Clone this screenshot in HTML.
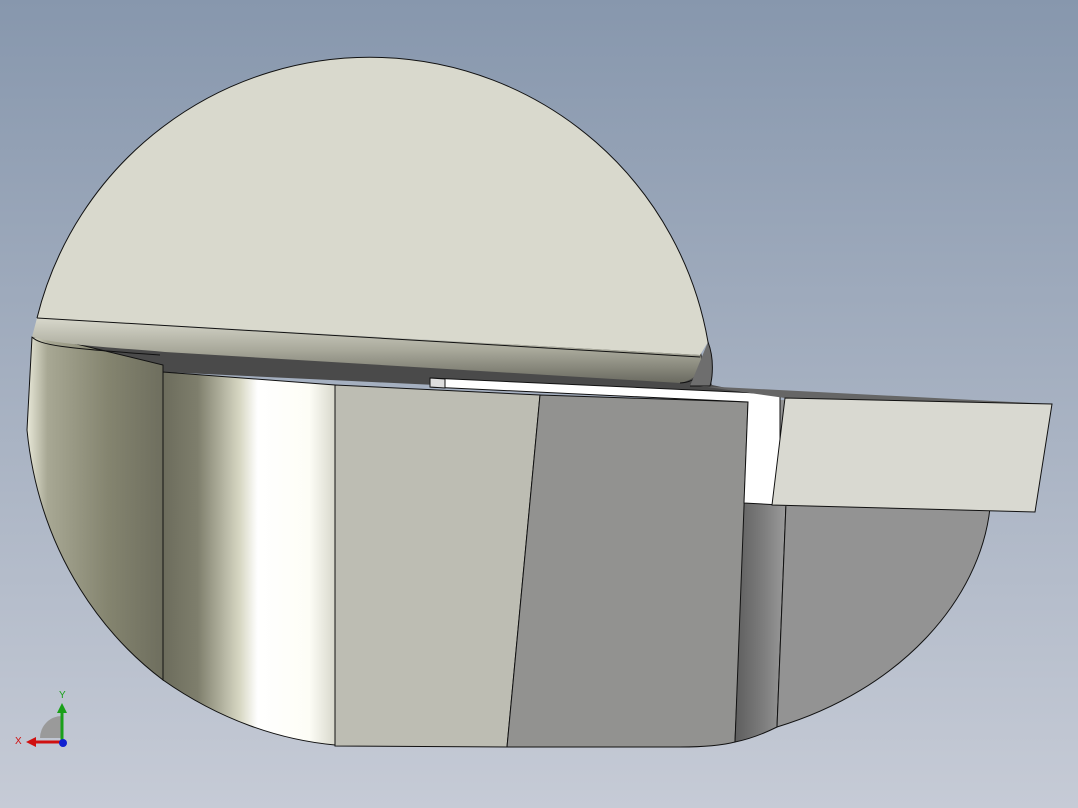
<!DOCTYPE html>
<html><head><style>html,body{margin:0;padding:0;overflow:hidden}svg{display:block}</style></head><body>
<svg width="1078" height="808" viewBox="0 0 1078 808" xmlns="http://www.w3.org/2000/svg">
<defs>
<linearGradient id="bg" x1="0" y1="0" x2="0" y2="1"><stop offset="0" stop-color="#8797ad"/><stop offset="1" stop-color="#c6cbd6"/></linearGradient>
<linearGradient id="cylL" x1="0" x2="1"><stop offset="0" stop-color="#e8e8d8"/><stop offset="0.15" stop-color="#a8a894"/><stop offset="0.6" stop-color="#84846f"/><stop offset="1" stop-color="#6e6e5e"/></linearGradient>
<linearGradient id="cylM" x1="0" x2="1"><stop offset="0" stop-color="#6c6c5c"/><stop offset="0.2" stop-color="#7e7e6c"/><stop offset="0.45" stop-color="#d8d8c4"/><stop offset="0.55" stop-color="#ffffff"/><stop offset="0.85" stop-color="#fdfdf6"/><stop offset="1" stop-color="#d8d8cc"/></linearGradient>
<linearGradient id="strip" x1="0" x2="1"><stop offset="0" stop-color="#5e5e5e"/><stop offset="0.5" stop-color="#7c7c7c"/><stop offset="1" stop-color="#a0a0a0"/></linearGradient>
<linearGradient id="fillet" x1="0" y1="0" x2="0" y2="1"><stop offset="0" stop-color="#d8d8cc"/><stop offset="0.5" stop-color="#a8a89a"/><stop offset="1" stop-color="#6a6a60"/></linearGradient>
</defs>
<rect width="1078" height="808" fill="url(#bg)"/>
<path d="M40 330 L700 350 L712 385 L760 395 L750 400 L163 372 L60 340 Z" fill="#4a4a4a"/>
<path d="M32 337 L60 340 L163 365 L163 680 C110 640 40 560 27 430 Z" fill="url(#cylL)" stroke="#111" stroke-width="1"/>
<path d="M163 365 L163 680 C220 720 280 740 335 745 L335 385 L163 372 Z" fill="url(#cylM)" stroke="#111" stroke-width="1"/>
<path d="M335 385 L540 395 L507 747 L335 746 Z" fill="#bdbdb3" stroke="#111" stroke-width="1"/>
<path d="M540 395 L750 402 L735 742 C720 746 700 747 680 747 L507 747 Z" fill="#929290" stroke="#111" stroke-width="1"/>
<path d="M748 402 L790 404 L777 727 C765 733 750 739 735 742 Z" fill="url(#strip)" stroke="#111" stroke-width="1"/>
<path d="M790 404 L990 508 C980 600 900 690 777 727 Z" fill="#939393" stroke="#111" stroke-width="1"/>
<path d="M780 400 L990 404 L990 510 L780 506 Z" fill="#929292"/>
<path d="M37 318 A343 343 0 0 1 708 342 L700 355 Z" fill="#d9d9cd"/>
<path d="M37 318 L700 355 C705 370 695 380 680 383 L165 352 C120 348 60 345 32 337 Z" fill="url(#fillet)"/>
<path d="M37 318 A343 343 0 0 1 708 342 C712 365 700 382 680 383" fill="none" stroke="#111" stroke-width="1"/>
<line x1="37" y1="318" x2="700" y2="357" stroke="#111" stroke-width="1"/>
<path d="M32 337 C40 345 60 348 160 355" fill="none" stroke="#111" stroke-width="1"/>
<path d="M708 342 C715 360 712 380 710 386 L690 386" fill="#6e6e6e" stroke="#111" stroke-width="1"/>
<path d="M430 378 L780 394 L780 505 L744 503 L748 402 L430 387 Z" fill="#ffffff" stroke="#111" stroke-width="1"/>
<path d="M430 378 L445 379 L445 388 L430 387 Z" fill="#ddd" stroke="#111" stroke-width="1"/>
<path d="M700 386 L1052 404 L785 398 Z" fill="#666"/>
<path d="M785 398 L1052 404 L1035 512 L772 505 Z" fill="#d9d9d1" stroke="#111" stroke-width="1"/>
<path d="M40 738 A22 22 0 0 1 62 716 L62 738 Z" fill="#9a9a9a"/>
<line x1="62" y1="742" x2="62" y2="712" stroke="#1aa01a" stroke-width="3"/>
<path d="M57 713 L62 703 L67 713 Z" fill="#1aa01a"/>
<line x1="62" y1="742" x2="35" y2="742" stroke="#d01010" stroke-width="3"/>
<path d="M36 737 L26 742 L36 747 Z" fill="#d01010"/>
<circle cx="63" cy="743" r="4" fill="#1020d0"/>
<text x="59" y="698" font-family="Liberation Sans, sans-serif" font-size="10" fill="#1aa01a">Y</text>
<text x="15" y="744" font-family="Liberation Sans, sans-serif" font-size="10" fill="#d01010">X</text>
</svg>
</body></html>
